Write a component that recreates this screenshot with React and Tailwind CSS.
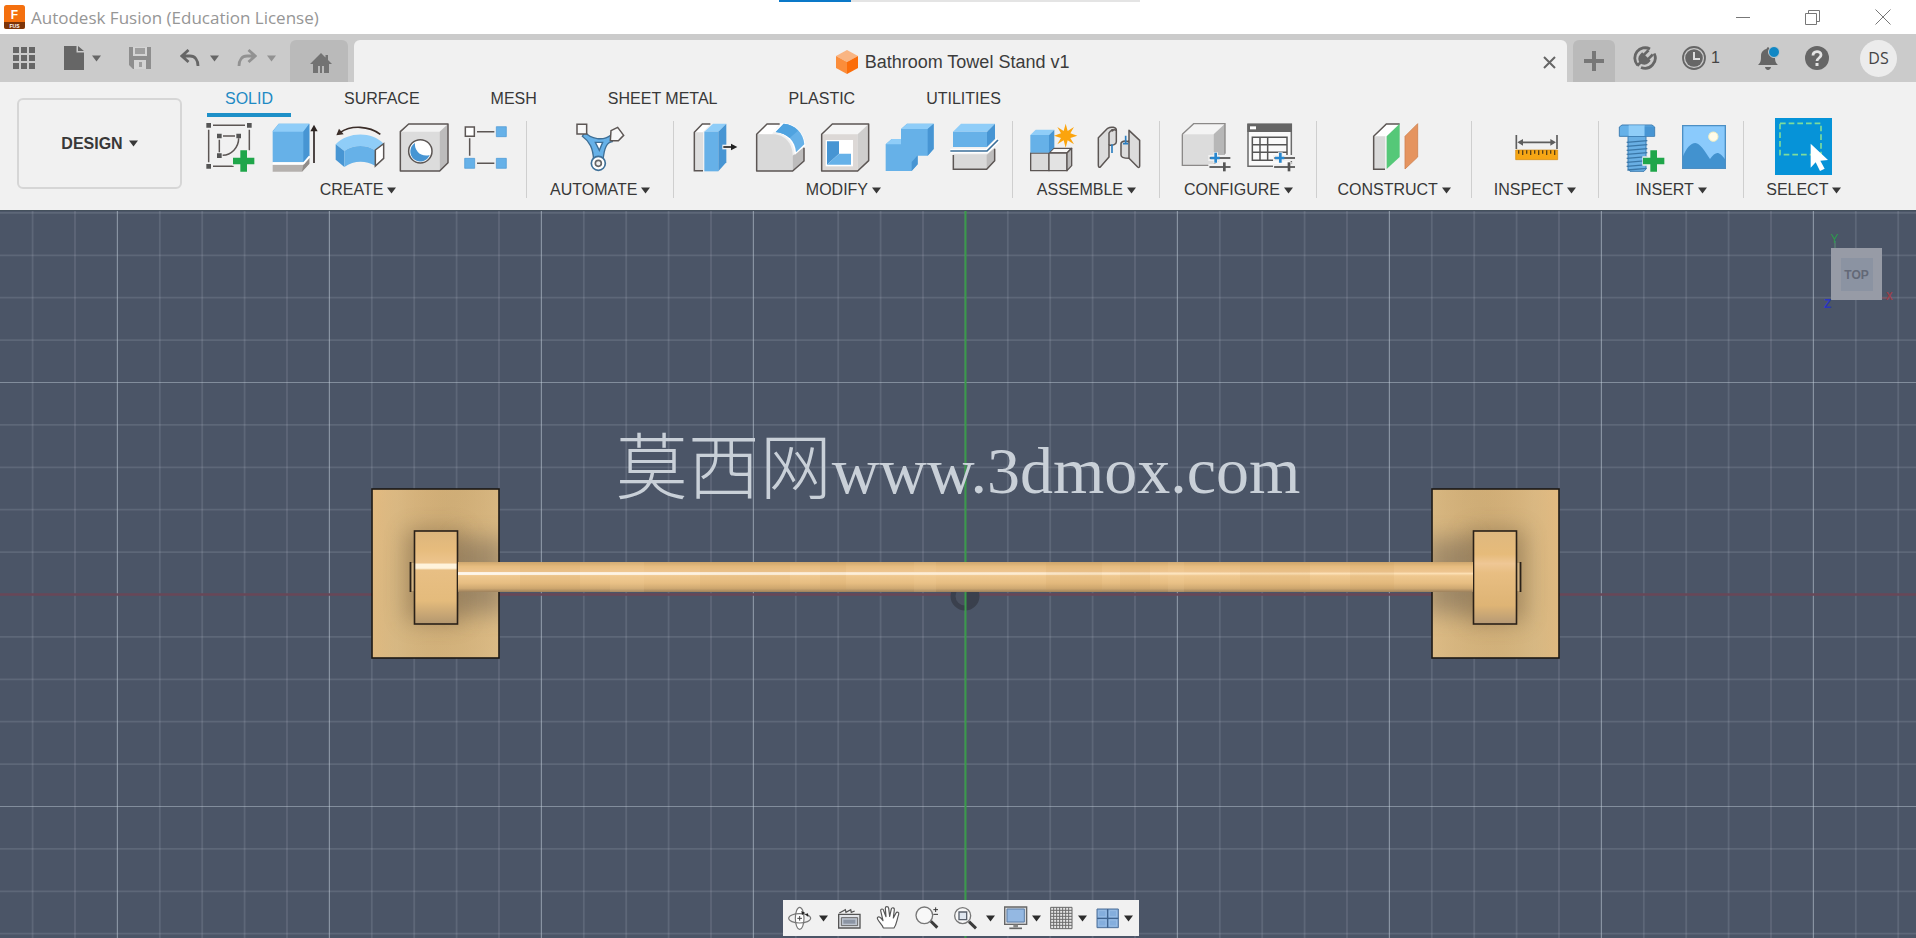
import React from "react";

const OUT = "#5c5654";
const B1 = "#8fcdf8";
const B2 = "#66b1e8";
const B3 = "#4795d3";

/* ---------- shared pieces ---------- */

function Caret() {
  return (
    <svg className="h-[7px] w-[9px] shrink-0" viewBox="0 0 9 7" fill="currentColor" aria-hidden="true">
      <path d="M0 0.5h9L4.500 6.600z" />
    </svg>
  );
}

function Icon({ box, className = "h-12 w-12", children }) {
  return (
    <svg className={"block shrink-0 overflow-visible " + className} viewBox={box} fill="none" aria-hidden="true">
      {children}
    </svg>
  );
}

function IconButton({ label, className = "", children }) {
  return (
    <button type="button" aria-label={label} className={"flex shrink-0 items-center justify-center " + className}>
      {children}
    </button>
  );
}

function Plus({ x, y }) {
  return (
    <g>
      <path d={`M${x} ${y - 34}v68M${x - 34} ${y}h68`} stroke="#f1f1f1" strokeWidth="28" />
      <path d={`M${x} ${y - 32}v64M${x - 32} ${y}h64`} stroke="#1fa64a" strokeWidth="20" />
    </g>
  );
}

/* ---------- ribbon icons ---------- */

const SketchIcon = () => (
  <Icon box="45 126 144 144">
    <path d="M66 133h96M53 146v98M66 256h62M175 146v62M96 165h36M85 176v38M143 172c0 28-22 50-48 51" stroke={OUT} strokeWidth="4.5" />
    <path d="M46 126h14v14h-14zM168 126h14v14h-14zM46 249h14v14h-14zM78 158h14v14h-14zM136 158h14v14h-14zM78 217h14v14h-14z" fill="#555" />
    <Plus x={158} y={240} />
  </Icon>
);

const ExtrudeIcon = () => (
  <Icon box="237 126 144 144">
    <path d="M245 252h92l18-24v20l-22 24h-88z" fill="#b5b1ae" />
    <path d="M337 252l18-24v20l-22 24z" fill="#918c89" />
    <path d="M245 150l18-22h92v96l-18 20h-92z" fill={B2} />
    <path d="M245 152l18-24h92l-18 24z" fill={B1} />
    <path d="M337 152l18-24v96l-18 20z" fill={B3} />
    <path d="M245 247h93l18-21" stroke="#fff" strokeWidth="6" />
    <path d="M369 246v-98" stroke="#2d2523" strokeWidth="5" />
    <path d="M369 131l-11 20h22z" fill="#2d2523" />
  </Icon>
);

const RevolveIcon = () => (
  <Icon box="429 126 144 144">
    <path d="M568 160c-34-26-88-28-120-6" stroke="#3b2d28" strokeWidth="5" />
    <path d="M436 163l8-20 14 17z" fill="#3b2d28" />
    <path d="M434 190c36-38 108-40 144-2l-26 20c-24-18-66-18-92 2z" fill={B1} />
    <path d="M434 190l26 20v48l-26-22z" fill={B3} />
    <path d="M460 210c26-20 68-20 92-2v46c-28-16-64-16-92 4z" fill={B2} />
    <path d="M553 207l25-19v44l-25 23z" fill="#fff" stroke={OUT} strokeWidth="4.5" />
  </Icon>
);

function GrayCube({ x }) {
  return (
    <g transform={`translate(${x} 0)`} strokeLinejoin="round">
      <path d="M0 152l25-23h118l-25 23z" fill="#f3f3f3" />
      <path d="M0 152h118v118H0z" fill="#dcdcdc" />
      <path d="M118 152l25-23v116l-25 25z" fill="#bdbcbc" />
      <path d="M0 152l25-23h118v116l-25 25H0z" stroke={OUT} strokeWidth="4.5" />
    </g>
  );
}

const HoleIcon = () => (
  <Icon box="621 126 144 144">
    <GrayCube x={628} />
    <circle cx="688" cy="211" r="35" fill="#fff" stroke={OUT} strokeWidth="4.5" />
    <path d="M672 186a30 30 0 1 0 44 36c-14 4-28 0-36-10-7-8-9-17-8-26z" fill={B3} />
  </Icon>
);

const PatternIcon = () => (
  <Icon box="813 126 144 144">
    <path d="M858 152h52M836 172v52M858 247h52" stroke={OUT} strokeWidth="4.5" />
    <path d="M823 138h27v28h-27z" fill="#fff" stroke={OUT} strokeWidth="4.5" />
    <path d="M916 137h30v30h-30zM821 232h30v30h-30zM916 232h30v30h-30z" fill={B2} stroke={B3} strokeWidth="2" />
  </Icon>
);

const AutomateIcon = () => (
  <Icon box="141 126 144 144">
    <path d="M168 152c16 24 56 28 78 10l4 20c-16 2-24 16-28 56h-28c-2-38-12-56-34-72z" fill={B2} stroke="#3e6f96" strokeWidth="4" />
    <path d="M199 184h22l-10 24z" fill="#fff" stroke="#3e6f96" strokeWidth="4" />
    <path d="M144 130h29v29h-29z" fill="#f8f8f8" stroke={OUT} strokeWidth="4.5" />
    <path d="M246 149l20-10 18 24-16 16h-24z" fill="#f8f8f8" stroke={OUT} strokeWidth="4.5" />
    <circle cx="208" cy="247" r="21" fill="#fff" stroke="#3e7098" strokeWidth="5" />
    <circle cx="208" cy="247" r="9" fill="#f1f1f1" stroke="#666" strokeWidth="5" />
  </Icon>
);

const PressPullIcon = () => (
  <Icon box="486 126 144 144">
    <path d="M496 154v115h26V152l22-23h-24z" fill="#dedede" />
    <path d="M496 154l24-25h24l-22 25z" fill="#fff" />
    <path d="M544 129h-24l-24 25v115h26" stroke={OUT} strokeWidth="4.5" />
    <path d="M526 152l26-24h40l-24 24z" fill={B1} />
    <path d="M526 152h42v119h-42z" fill={B2} />
    <path d="M568 152l24-24v116l-24 27z" fill={B3} />
    <path d="M580 198h34" stroke="#f1f1f1" strokeWidth="14" />
    <path d="M583 198h30" stroke="#222" strokeWidth="5" />
    <path d="M625 198l-19-10v20z" fill="#222" />
  </Icon>
);

const FilletIcon = () => (
  <Icon box="678 126 144 144">
    <path d="M683 160l30-31h38l-22 31z" fill="#fff" />
    <path d="M683 160h50c32 0 58 26 58 64v46H683z" fill="#d9d9d9" />
    <path d="M791 224l34-30v46l-34 30z" fill="#bdbcbc" />
    <path d="M752 129h-38l-31 31v110h108l34-30v-40" stroke={OUT} strokeWidth="4.5" strokeLinejoin="round" />
    <path d="M733 152l26-26c38 0 68 28 70 68l-32 28c0-38-26-66-64-70z" fill="#fff" />
    <path d="M740 153l24-25c34 2 60 28 62 62l-25 24c-2-34-26-58-61-61z" fill={B2} />
    <path d="M740 153l24-25c18 2 32 9 43 21l-25 22c-11-10-26-16-42-18z" fill="#4fa3e0" />
  </Icon>
);

const ShellIcon = () => (
  <Icon box="870 126 144 144">
    <g strokeLinejoin="round">
      <path d="M878 160l32-31h109l-33 31z" fill="#f5f5f5" />
      <path d="M878 160h108v110H878z" fill="#dcd8d6" />
      <path d="M986 160l33-31v110l-33 31z" fill="#cfcecd" />
      <path d="M878 160l32-31h109v110l-33 31H878z" stroke={OUT} strokeWidth="4.5" />
    </g>
    <path d="M890 177h82v79h-82z" fill="#fff" />
    <path d="M894 181h36v37l-36 33z" fill={B3} />
    <path d="M894 251l36-33h36v33z" fill={B2} />
  </Icon>
);

const CombineIcon = () => (
  <Icon box="1062 126 144 144">
    <path d="M1070 190l18-16h28v-30l18-16h80v76l-18 20h-30v26l-18 20h-78z" fill={B2} />
    <path d="M1116 144l18-16h80l-18 16zM1070 190l18-16h28v16z" fill={B1} />
    <path d="M1196 144l18-16v76l-18 20zM1148 243l18-20v27l-18 20z" fill={B3} />
  </Icon>
);

const SplitIcon = () => (
  <Icon box="1254 126 144 144">
    <path d="M1273 220h100l24-20v40l-24 26h-100z" fill="#d9d9d9" />
    <path d="M1373 222l24-20v38l-24 26z" fill="#bdbcbc" />
    <path d="M1273 222v43h100l24-26v-36" stroke={OUT} strokeWidth="4.5" />
    <path d="M1272 152l24-24h102l-24 24z" fill={B1} />
    <path d="M1272 152h102v46h-102z" fill={B2} />
    <path d="M1374 152l24-24v46l-24 24z" fill={B3} />
    <path d="M1264 210h110l34-34" stroke="#fff" strokeWidth="14" />
    <path d="M1264 210h110l33-33" stroke="#3b6f99" strokeWidth="5" />
  </Icon>
);

const NewComponentIcon = () => (
  <Icon box="65 126 144 144">
    <g stroke={OUT} strokeWidth="4" strokeLinejoin="round">
      <path d="M67 216h55v53H67z" fill="#dadada" />
      <path d="M122 216l14-14h54l-14 14z" fill="#f8f8f8" />
      <path d="M122 216h54v53h-54z" fill="#e3e3e3" />
      <path d="M176 216l14-14v52l-14 15z" fill="#bdbcbc" />
    </g>
    <path d="M66 162l16-16h56l-16 16z" fill={B1} />
    <path d="M66 162h56v53H66z" fill={B2} />
    <path d="M122 162l16-16v53l-16 16z" fill={B3} />
    <circle cx="172" cy="164" r="29" fill="#f1f1f1" />
    <path d="M172 128l6 22 19-12-11 19 21 7-21 7 11 19-19-12-6 22-6-22-19 12 11-19-21-7 21-7-11-19 19 12z" fill="#fba40d" />
  </Icon>
);

const JointIcon = () => (
  <Icon box="257 126 144 144">
    <g stroke={OUT} strokeWidth="4.5" strokeLinejoin="round">
      <path d="M270 170l28-28c10-6 26-4 26 6v34c0 8-10 12-22 10v36l-26 30c-4 2-6-1-6-5z" fill="#dcdcdc" />
      <path d="M302 192v-36c4-8 14-12 22-8" />
      <path d="M394 178l-32-30v34c-12-4-24-2-24 6v34c0 8 12 10 24 10l26 26c4 3 6 0 6-4z" fill="#dcdcdc" />
      <path d="M362 182v50" />
    </g>
    <path d="M311 190v26M352 164v24M344 188h16" stroke="#2d7fc0" strokeWidth="5" />
    <circle cx="312" cy="148" r="4" fill={OUT} />
  </Icon>
);

function Sliders({ x }) {
  return (
    <g transform={`translate(${x} 0)`}>
      <path d="M-4 231h68M-4 258h68" stroke="#f1f1f1" strokeWidth="18" />
      <path d="M0 231h62M0 258h62" stroke="#666" strokeWidth="6" />
      <path d="M18 214v32M45 243v28" stroke="#f1f1f1" strokeWidth="14" />
      <path d="M0 258h62" stroke="#666" strokeWidth="6" />
      <path d="M44 244v27" stroke="#555" strokeWidth="8" />
      <path d="M18 215v30M2 231h28" stroke="#2787cf" strokeWidth="8" />
    </g>
  );
}

const ConfigureIcon = () => (
  <Icon box="519 126 144 144">
    <path d="M520 160l34-32h94l-34 32z" fill="#f4f4f4" />
    <path d="M520 160h94v93h-94z" fill="#dcdcdc" />
    <path d="M614 160l34-32v96l-34 29z" fill="#b7b7b7" />
    <path d="M520 160l34-32h94v90M520 160v93h82" stroke="#8b8988" strokeWidth="4" />
    <Sliders x={602} />
  </Icon>
);

const TableIcon = () => (
  <Icon box="711 126 144 144">
    <path d="M717 130h130v126h-130z" fill="#fafafa" stroke="#6b6b6b" strokeWidth="4.5" />
    <path d="M715 128h134v25h-134z" fill="#656565" />
    <path d="M723 136h18v9h-18z" fill="#fff" />
    <path d="M730 169h104v69h-104zM730 191h104M730 214h104M753 169v69M776 169v69" stroke="#555" strokeWidth="4.5" />
    <Sliders x={796} />
  </Icon>
);

const ConstructIcon = () => (
  <Icon box="1083 126 144 144">
    <path d="M1094 166l36-37h42l-40 37z" fill="#fff" />
    <path d="M1094 166h34v99h-34z" fill="#dadada" />
    <path d="M1172 129h-40l-38 37v99h34" stroke={OUT} strokeWidth="4.5" />
    <path d="M1133 166l39-38v100l-39 36z" fill="#55c878" />
    <path d="M1188 166l38-38v100l-38 36z" fill="#e5945f" stroke="#cf8352" strokeWidth="2.5" />
  </Icon>
);

const InspectIcon = () => (
  <Icon box="126 126 144 144">
    <path d="M142 162v42M264 162v42M152 184h102" stroke="#5e5e5e" strokeWidth="5" />
    <path d="M145 184l17-10v20zM261 184l-17-10v20z" fill="#5e5e5e" />
    <path d="M140 207h126v29H140z" fill="#f6a614" stroke="#d28a10" strokeWidth="2" />
    <path d="M149 208v10M161 208v14M173 208v10M185 208v14M197 208v10M209 208v14M221 208v10M233 208v14M245 208v10M257 208v14" stroke="#5b4215" strokeWidth="4" />
  </Icon>
);

const BoltIcon = () => (
  <Icon box="438 126 144 144">
    <path d="M477 166h54v98l-6 7h-42l-6-7z" fill="#69afe4" stroke="#3f7fb4" strokeWidth="3" />
    <path d="M473 184l62-5M473 196l62-5M473 208l62-5M473 220l62-5M473 232l62-5M473 244l62-5M473 256l62-5M475 267l58-5" stroke="#3a77a8" strokeWidth="4" />
    <path d="M451 138l8-6h90l8 6v28H451z" fill={B2} stroke="#3f7fb4" strokeWidth="3" />
    <path d="M479 133h48v32h-48z" fill={B1} />
    <path d="M527 136h28v29h-28z" fill={B3} />
    <Plus x={554} y={240} />
  </Icon>
);

const PictureIcon = () => (
  <Icon box="630 126 144 144">
    <path d="M641 134h128v128H641z" fill="#8acafc" />
    <path d="M641 228c10-26 24-42 38-42s30 26 44 48c8-12 16-18 22-18s16 8 24 20v26H641z" fill="#4292cf" />
    <circle cx="733" cy="167" r="14" fill="#fffbe9" stroke="#f5f0c0" strokeWidth="3" />
    <path d="M641 134h128v128H641z" stroke="#4c8fc4" strokeWidth="4" />
  </Icon>
);

const SelectIcon = () => (
  <Icon box="918 114 171 171" className="h-[57px] w-[57px]">
    <path d="M918 114h171v171H918z" fill="#0693d8" />
    <path d="M933 130h123v94H933z" stroke="#7ddc9c" strokeWidth="5" strokeDasharray="17 9" />
    <path d="M1025 191l52 49-23 2 13 24-14 7-13-26-15 16z" fill="#fff" />
  </Icon>
);

/* ---------- ribbon ---------- */

const GROUPS = [
  { name: "CREATE", pad: "px-4", icons: [["Create Sketch", SketchIcon], ["Extrude", ExtrudeIcon], ["Revolve", RevolveIcon], ["Hole", HoleIcon], ["Pattern", PatternIcon]] },
  { name: "AUTOMATE", pad: "px-[23px]", icons: [["Automated Modeling", AutomateIcon]] },
  { name: "MODIFY", pad: "px-[17px]", icons: [["Press Pull", PressPullIcon], ["Fillet", FilletIcon], ["Shell", ShellIcon], ["Combine", CombineIcon], ["Split Body", SplitIcon]] },
  { name: "ASSEMBLE", pad: "px-[17px]", icons: [["New Component", NewComponentIcon], ["Joint", JointIcon]] },
  { name: "CONFIGURE", pad: "px-[22px]", icons: [["Configure Model", ConfigureIcon], ["Configuration Table", TableIcon]] },
  { name: "CONSTRUCT", pad: "px-5", icons: [["Offset Plane", ConstructIcon]] },
  { name: "INSPECT", pad: "px-[22px]", icons: [["Measure", InspectIcon]] },
  { name: "INSERT", pad: "px-4", icons: [["Insert Fastener", BoltIcon], ["Insert Image", PictureIcon]] },
  { name: "SELECT", pad: "px-[22px]", icons: [["Select Window", SelectIcon]] },
];

const TABS = ["SOLID", "SURFACE", "MESH", "SHEET METAL", "PLASTIC", "UTILITIES"];

function Ribbon() {
  return (
    <section className="flex h-32 shrink-0 bg-[#f1f1f1] text-[#383838]">
      <button
        type="button"
        className="mt-4 ml-[17px] flex h-[91px] w-[165px] shrink-0 items-center justify-center gap-1.5 rounded-md border-2 border-[#d6d6d6] text-base font-bold"
      >
        DESIGN
        <Caret />
      </button>
      <div className="ml-2 flex flex-col">
        <div role="tablist" className="flex h-[35px] gap-[35px] pl-[17px]">
          {TABS.map((t, i) => (
            <button
              key={t}
              type="button"
              role="tab"
              aria-selected={i === 0}
              className={
                "border-b-4 px-[18px] pt-0.5 text-base whitespace-nowrap " +
                (i === 0 ? "border-[#1e90c8] text-[#1e8ac4]" : "border-transparent")
              }
            >
              {t}
            </button>
          ))}
        </div>
        <div className="flex">
          {GROUPS.map((g, i) => (
            <div key={g.name} className="flex">
              <div className={"flex flex-col items-center " + g.pad}>
                <div className="flex h-[59px] items-center gap-4">
                  {g.icons.map(([label, Glyph]) => (
                    <IconButton key={label} label={label}>
                      <Glyph />
                    </IconButton>
                  ))}
                </div>
                <button type="button" className="mt-1 flex items-center gap-1 text-base leading-5 whitespace-nowrap">
                  {g.name}
                  <Caret />
                </button>
              </div>
              {i < GROUPS.length - 1 && <div className="mt-1 h-[77px] w-px bg-[#cfcfcf]" />}
            </div>
          ))}
        </div>
      </div>
    </section>
  );
}

/* ---------- title and document bars ---------- */

function TitleBar() {
  return (
    <header className="relative flex h-[34px] shrink-0 items-center bg-white">
      <div className="absolute inset-x-0 top-0 flex justify-center pl-0.5">
        <div className="h-0.5 w-[72px] bg-[#0a78c8]" />
        <div className="h-0.5 w-[289px] bg-[#e4e4e4]" />
      </div>
      <svg className="ml-1 h-6 w-[22px]" viewBox="0 0 22 24" aria-hidden="true">
        <rect width="21" height="24" rx="2.5" fill="#f4700f" />
        <path d="M0 17h21v4.500a2.500 2.500 0 0 1-2.500 2.500H2.500A2.500 2.500 0 0 1 0 21.500z" fill="#7d3408" />
        <text x="10.500" y="13.500" textAnchor="middle" fontSize="12" fontWeight="700" fill="#fff" fontFamily="Liberation Sans">F</text>
        <text x="10.500" y="22.500" textAnchor="middle" fontSize="5" fontWeight="700" fill="#fff" fontFamily="Liberation Sans">FUS</text>
      </svg>
      <h1 className="ml-[5px] pt-0.5 font-['Open_Sans',sans-serif] text-[17px] text-[#969696]">Autodesk Fusion (Education License)</h1>
      <div className="ml-auto flex items-center gap-[54px] pr-[25px] text-[#777]">
        <IconButton label="Minimize">
          <svg className="h-4 w-4" viewBox="0 0 16 16" stroke="currentColor" aria-hidden="true"><path d="M1 8.500h14" /></svg>
        </IconButton>
        <IconButton label="Restore">
          <svg className="h-4 w-4" viewBox="0 0 16 16" fill="none" stroke="currentColor" aria-hidden="true"><path d="M.5 4.500h11v11H.5zM3.500 4.500v-3h11v11h-3" /></svg>
        </IconButton>
        <IconButton label="Close window">
          <svg className="h-4 w-4" viewBox="0 0 16 16" stroke="currentColor" aria-hidden="true"><path d="M.5.5l15 15M15.500.5l-15 15" /></svg>
        </IconButton>
      </div>
    </header>
  );
}

function DocumentBar() {
  return (
    <div className="flex h-12 shrink-0 bg-[#cbcbcb] pt-1.5 text-[#666]">
      <div className="flex h-[36px] items-center pl-[13px]">
        <IconButton label="Data panel">
          <svg className="h-[22px] w-[22px]" viewBox="0 0 22 22" fill="currentColor" aria-hidden="true">
            <path d="M0 0h6v6H0zM8 0h6v6H8zM16 0h6v6h-6zM0 8h6v6H0zM8 8h6v6H8zM16 8h6v6h-6zM0 16h6v6H0zM8 16h6v6H8zM16 16h6v6h-6z" />
          </svg>
        </IconButton>
        <IconButton label="File" className="ml-[29px] gap-2">
          <svg className="h-6 w-5" viewBox="0 0 20 24" fill="currentColor" aria-hidden="true">
            <path d="M0 0h12.500v6.500H20V24H0zM14 0l6 5h-6z" />
          </svg>
          <Caret />
        </IconButton>
        <IconButton label="Save" className="ml-7 text-[#8e8e8e]">
          <svg className="h-[22px] w-[22px]" viewBox="0 0 22 22" aria-hidden="true">
            <path d="M0 0h22v22H4l-4-4z" fill="currentColor" />
            <path d="M4 0h14v9H4zM5 13h12v9H5z" fill="#d4d4d4" />
            <path d="M6 1h10v6H6zM10 15h3v5h-3z" fill="currentColor" opacity=".75" />
          </svg>
        </IconButton>
        <IconButton label="Undo" className="ml-[29px] gap-2.5">
          <svg className="h-[18px] w-5" viewBox="0 0 20 18" fill="none" stroke="currentColor" strokeWidth="2.800" aria-hidden="true">
            <path d="M8.500 1L1.800 7l6.700 6M2 7h8c5 0 8 4 8 10" />
          </svg>
          <Caret />
        </IconButton>
        <IconButton label="Redo" className="ml-[18px] gap-2.5 text-[#929292]">
          <svg className="h-[18px] w-5" viewBox="0 0 20 18" fill="none" stroke="currentColor" strokeWidth="2.800" aria-hidden="true">
            <path d="M11.500 1l6.700 6-6.700 6M18 7h-8C5 7 2 11 2 17" />
          </svg>
          <Caret />
        </IconButton>
      </div>
      <IconButton label="Home" className="mr-1.5 ml-[14px] h-[42px] w-[58px] rounded-t-md bg-[#bababa] pt-1 pl-1 text-[#737373]">
        <svg className="h-[22px] w-[22px]" viewBox="0 0 22 22" fill="currentColor" aria-hidden="true">
          <path d="M11 1l4.500 4.500V3H18v5l4 4h-3v9h-5v-7h-2v7h-2v-7H8v7H3v-9H0z" />
        </svg>
      </IconButton>
      <div className="flex h-[42px] min-w-0 flex-1 items-center rounded-t-md bg-[#f1f1f1] pt-0.5 pr-[11px] pl-2">
        <div className="flex flex-1 items-center justify-center gap-[7px]">
          <svg className="h-6 w-[22px]" viewBox="0 0 22 24" aria-hidden="true">
            <path d="M11 0l11 6-11 6L0 6z" fill="#f9b583" />
            <path d="M0 6l11 6v12L0 18z" fill="#fb8d3a" />
            <path d="M22 6l-11 6v12l11-6z" fill="#fb6d0a" />
          </svg>
          <span className="text-lg leading-6 text-[#3c3c3c]">Bathroom Towel Stand v1</span>
        </div>
        <IconButton label="Close tab">
          <svg className="h-[13px] w-[13px]" viewBox="0 0 13 13" stroke="currentColor" strokeWidth="2" aria-hidden="true"><path d="M1 1l11 11M12 1L1 12" /></svg>
        </IconButton>
      </div>
      <IconButton label="New tab" className="ml-1.5 h-[42px] w-[42px] rounded-t-md bg-[#bababa] text-[#777]">
        <svg className="h-5 w-5" viewBox="0 0 20 20" stroke="currentColor" strokeWidth="4" aria-hidden="true"><path d="M10 0v20M0 10h20" /></svg>
      </IconButton>
      <div className="flex h-9 items-center pr-[19px] pl-[18px]">
        <IconButton label="Extensions">
          <svg className="h-6 w-6" viewBox="0 0 24 24" fill="none" stroke="currentColor" aria-hidden="true">
            <path d="M4.500 19A10.300 10.300 0 0 1 17 3M21.200 7.500A10.300 10.300 0 0 1 8 21.500" strokeWidth="2.800" />
            <g transform="translate(12 12) rotate(45)">
              <path d="M-6-2H6V1A6 6 0 0 1-6 1z" fill="currentColor" stroke="none" />
              <path d="M-3-1v-7M3-1v-7M0 6v5" strokeWidth="2.600" />
            </g>
          </svg>
        </IconButton>
        <button type="button" aria-label="Job status" className="ml-[25px] flex items-center gap-[5px]">
          <svg className="h-6 w-6" viewBox="0 0 24 24" fill="none" aria-hidden="true">
            <circle cx="12" cy="12" r="11" stroke="currentColor" strokeWidth="1.800" />
            <circle cx="12" cy="12" r="8.800" fill="currentColor" />
            <path d="M12 6v7h6" stroke="#dcdcdc" strokeWidth="2" />
          </svg>
          <span className="text-base text-[#444]">1</span>
        </button>
        <IconButton label="Notifications" className="ml-[38px]">
          <svg className="h-6 w-[22px]" viewBox="0 0 22 24" fill="currentColor" aria-hidden="true">
            <path d="M0 19c3-3 3-5 3-9 0-4 2.500-6.500 5.500-7C9 .5 11 .5 11.500 3c3.500.5 5.500 3 5.500 7 0 4 0 6 3 9zM7 21h6c0 1.500-1.500 3-3 3s-3-1.500-3-3z" />
            <circle cx="16" cy="6" r="5.500" fill="#1187c4" stroke="#cbcbcb" />
          </svg>
        </IconButton>
        <IconButton label="Help" className="ml-[25px]">
          <svg className="h-6 w-6" viewBox="0 0 24 24" aria-hidden="true">
            <circle cx="12" cy="12" r="12" fill="currentColor" />
            <path d="M8 9.500c0-5 8-5 8-.5 0 3-4 3-4 6" stroke="#e3e3e3" strokeWidth="2.800" fill="none" />
            <path d="M10.500 17h3v3h-3z" fill="#e3e3e3" />
          </svg>
        </IconButton>
        <button type="button" aria-label="Account DS" className="ml-[31px] flex h-[37px] w-[37px] items-center justify-center rounded-full bg-[#ececec] font-['Open_Sans',sans-serif] text-base text-[#444]">
          DS
        </button>
      </div>
    </div>
  );
}

/* ---------- viewport ---------- */

const STEP = 42.4;
const CX = 965.4;
const CY = 384.5;
const COLUMNS = Array.from({ length: 47 }, (_, i) => i - 23);
const ROWS = Array.from({ length: 19 }, (_, i) => i - 9);

function Bracket({ x, flip, face }) {
  return (
    <g transform={flip ? `translate(${x + 127} 278) scale(-1 1)` : `translate(${x} 278)`}>
      <rect x="0" y="1" width="127" height="169" fill="url(#plate)" />
      <rect x="0" y="1" width="127" height="169" fill="url(#grain)" />
      <g clipPath="url(#plateClip)">
        <rect x="34" y="42" width="58" height="92" fill="#5a4630" opacity=".38" filter="url(#soft)" />
        <rect x="84" y="50" width="50" height="76" fill="#5b534c" opacity=".42" filter="url(#soft)" />
      </g>
      <rect x="0" y="1" width="127" height="169" fill="none" stroke="#1c1814" strokeWidth="1.600" />
      <rect x="38" y="75" width="5" height="28" fill="#d2b383" />
      <path d="M38.500 74v30" stroke="#2a2118" strokeWidth="1.800" />
      <rect x="85" y="74" width="43" height="30" fill="url(#rod)" />
      <rect x="42.500" y="43" width="43" height="93" fill={face} stroke="#2a2118" strokeWidth="1.600" />
    </g>
  );
}

function Scene() {
  return (
    <svg className="absolute inset-0 h-full w-full" viewBox="0 0 1916 728" preserveAspectRatio="xMidYMid slice" role="img" aria-label="Towel stand, top view">
      <defs>
        <linearGradient id="plate" x1="0" y1="0" x2="1" y2="1">
          <stop offset="0" stopColor="#deb67e" />
          <stop offset=".35" stopColor="#d3b27c" />
          <stop offset=".7" stopColor="#d6b680" />
          <stop offset="1" stopColor="#dcbd88" />
        </linearGradient>
        <linearGradient id="grain">
          <stop offset="0" stopColor="#e6bd82" stopOpacity=".6" />
          <stop offset=".2" stopColor="#d9bc88" stopOpacity=".4" />
          <stop offset=".55" stopColor="#bf9a62" stopOpacity=".22" />
          <stop offset="1" stopColor="#dcba84" stopOpacity=".5" />
        </linearGradient>
        <linearGradient id="rod" x2="0" y2="1">
          <stop offset="0" stopColor="#cfa76e" />
          <stop offset=".15" stopColor="#e7bd80" />
          <stop offset=".33" stopColor="#eec590" />
          <stop offset=".38" stopColor="#fde0b4" />
          <stop offset=".46" stopColor="#efc890" />
          <stop offset=".7" stopColor="#e7be82" />
          <stop offset=".88" stopColor="#cfa972" />
          <stop offset="1" stopColor="#9c805c" />
        </linearGradient>
        <linearGradient id="shine">
          <stop offset="0" stopColor="#fff" stopOpacity=".75" />
          <stop offset=".55" stopColor="#fff" stopOpacity=".4" />
          <stop offset=".75" stopColor="#fff" stopOpacity=".08" />
          <stop offset="1" stopColor="#fff" stopOpacity="0" />
        </linearGradient>
        <linearGradient id="blockBright" x2="0" y2="1">
          <stop offset="0" stopColor="#dcb57c" />
          <stop offset=".2" stopColor="#e6bc7d" />
          <stop offset=".34" stopColor="#edc48d" />
          <stop offset=".36" stopColor="#fff3dc" />
          <stop offset=".4" stopColor="#fff3dc" />
          <stop offset=".42" stopColor="#e8bf84" />
          <stop offset=".75" stopColor="#e4bb7c" />
          <stop offset="1" stopColor="#b3976f" />
        </linearGradient>
        <linearGradient id="blockSoft" x2="0" y2="1">
          <stop offset="0" stopColor="#dfb87f" />
          <stop offset=".25" stopColor="#e6bb7a" />
          <stop offset=".35" stopColor="#efc795" />
          <stop offset=".45" stopColor="#e8be82" />
          <stop offset=".8" stopColor="#deb475" />
          <stop offset="1" stopColor="#b69a75" />
        </linearGradient>
        <filter id="soft" x="-50%" y="-50%" width="200%" height="200%">
          <feGaussianBlur stdDeviation="11" />
        </filter>
        <clipPath id="plateClip">
          <rect x="0" y="1" width="127" height="169" />
        </clipPath>
      </defs>

      {COLUMNS.map((c) => (
        <path key={"c" + c} d={`M${CX + c * STEP} 0V728`} stroke="#c6d2de" strokeOpacity={c % 5 === 0 ? 0.5 : 0.15} strokeWidth={c % 5 === 0 ? 1.2 : 1.8} />
      ))}
      {ROWS.map((r) => (
        <path key={"r" + r} d={`M0 ${CY + r * STEP}H1916`} stroke="#c6d2de" strokeOpacity={r % 5 === 0 ? 0.45 : 0.15} strokeWidth={r % 5 === 0 ? 1.2 : 1.8} />
      ))}
      <path d="M0 384.500H1916" stroke="#684757" strokeWidth="2.400" />
      <circle cx="965" cy="386" r="12" fill="#4a5160" stroke="#3a404d" strokeWidth="5" />
      <path d="M965 374a12 12 0 0 1 0 24z" fill="#3a404d" />
      <path d="M965.500 0V728" stroke="#3a9a4a" strokeWidth="2" />
      <path d="M0 .5H1916" stroke="#44505c" />

      <Bracket x={372} face="url(#blockBright)" />
      <Bracket x={1432} face="url(#blockSoft)" flip />
      <rect x="458" y="352" width="1015" height="30" fill="url(#rod)" />
      {[[520, 60], [610, 34], [700, 90], [820, 26], [914, 22], [1046, 56], [1120, 30], [1168, 16], [1240, 70], [1350, 44]].map(([x, w], i) => (
        <rect key={x} x={x} y="352" width={w} height="30" fill={i % 3 === 1 ? "#fbe0b0" : "#c98f4a"} opacity=".1" />
      ))}
      <rect x="458" y="362" width="1015" height="3" fill="url(#shine)" />
    </svg>
  );
}

function ViewCube() {
  return (
    <svg className="absolute top-[19px] right-4 h-[84px] w-[84px]" viewBox="0 0 84 84" aria-label="View cube" role="img">
      <path d="M19 12v8" stroke="#5c8f74" />
      <rect x="15" y="19" width="51" height="52" fill="#979ba6" />
      <rect x="25" y="29" width="32" height="33" fill="#8b93a2" />
      <path d="M66 69h6" stroke="#8e4a58" />
      <g fontFamily="Liberation Sans" fontSize="12">
        <text x="40.500" y="49.500" textAnchor="middle" fontWeight="700" fill="#636977">TOP</text>
        <text x="14.500" y="14" fill="#2c9a4c">Y</text>
        <text x="8" y="79" fontWeight="700" fill="#2a35c0">Z</text>
        <text x="70" y="71" fontSize="10" fontWeight="700" fill="#9c3f4a">X</text>
      </g>
    </svg>
  );
}

const NAV = "h-6 w-6";

function NavigationBar() {
  return (
    <div className="absolute inset-x-0 bottom-0.5 flex justify-center pl-1.5">
      <div role="toolbar" aria-label="Navigation" className="flex h-9 items-center bg-[#f1f1f1] pr-1.5 pl-[5px] text-[#2c2c2c]">
        <IconButton label="Orbit" className="gap-[7px]">
          <Icon box="53 43 72 72" className={NAV}>
            <ellipse cx="88" cy="80" rx="13" ry="33" stroke="#777" strokeWidth="3.500" fill="#fff" />
            <ellipse cx="88" cy="80" rx="33" ry="14" stroke="#777" strokeWidth="3.500" />
            <path d="M81 80h14M88 73v14" stroke="#444" strokeWidth="3" />
            <path d="M93 58l11 5-9 7zM104 68l9-3 1 11z" fill="#222" />
          </Icon>
          <Caret />
        </IconButton>
        <IconButton label="Look at" className="ml-[9px]">
          <Icon box="201 45 72 72" className={NAV}>
            <path d="M206 70h64v41h-64z" fill="#e4e6ea" stroke="#555" strokeWidth="4" />
            <path d="M214 80h49v24h-49z" fill="#bcc3ce" stroke="#666" strokeWidth="3" />
            <path d="M220 86h36v12h-36z" fill="#8b94a3" />
            <path d="M208 66l18-10 2 8 14-8 2 8 10-4" stroke="#555" strokeWidth="4" />
          </Icon>
        </IconButton>
        <IconButton label="Pan" className="ml-4">
          <Icon box="319 45 72 72" className={NAV}>
            <path d="M338 111c-2-10-18-22-18-30 2-6 9-4 17 8l-7-30c0-7 8-6 9 0l7 18-2-25c0-7 9-7 10 0l3 24 5-22c2-6 10-4 9 2l-3 25 8-15c3-5 10-2 8 4-6 18-6 30-14 41z" fill="#fff" stroke="#555" strokeWidth="3.500" strokeLinejoin="round" />
          </Icon>
        </IconButton>
        <IconButton label="Zoom" className="ml-3.5">
          <Icon box="435 43 72 72" className={NAV}>
            <path d="M482 88l20 20" stroke="#3c3c3c" strokeWidth="9" />
            <circle cx="463" cy="71" r="25" fill="#f8f8f8" stroke="#777" strokeWidth="4" />
            <path d="M490 54h14M497 47v14M490 68h14" stroke="#333" strokeWidth="3" />
          </Icon>
        </IconButton>
        <IconButton label="Fit" className="ml-[15px] gap-2">
          <Icon box="553 43 72 72" className={NAV}>
            <path d="M598 90l21 20" stroke="#3c3c3c" strokeWidth="9" />
            <circle cx="579" cy="72" r="24" fill="#f8f8f8" stroke="#777" strokeWidth="4" />
            <path d="M568 61h23v23h-23z" fill="#dfe6ef" stroke="#59606c" strokeWidth="4" />
          </Icon>
          <Caret />
        </IconButton>
        <IconButton label="Display settings" className="ml-[9px] gap-1">
          <Icon box="702 45 72 72" className={NAV}>
            <path d="M704 48h66v52h-66z" fill="#d7d9dc" stroke="#666" strokeWidth="4" />
            <path d="M711 54h52v39h-52z" fill="#94b8e2" stroke="#5c7fa8" strokeWidth="3" />
            <path d="M730 101h14v8h-14z" fill="#888" />
            <path d="M718 112h38" stroke="#666" strokeWidth="5" />
          </Icon>
          <Caret />
        </IconButton>
        <IconButton label="Grid and snaps" className="ml-[9px] gap-1">
          <Icon box="841 45 72 72" className={NAV}>
            <path d="M843 49h64v64h-64z" fill="#e6e6e6" stroke="#666" strokeWidth="3" />
            <path d="M843 58h64M843 67h64M843 76h64M843 85h64M843 94h64M843 103h64M852 49v64M861 49v64M870 49v64M879 49v64M888 49v64M897 49v64" stroke="#6b6b6b" strokeWidth="3" />
          </Icon>
          <Caret />
        </IconButton>
        <IconButton label="Viewports" className="ml-[9px] gap-1">
          <Icon box="979 45 72 72" className={NAV}>
            <path d="M982 54h64v56h-64z" fill="#84aedd" stroke="#4d6f98" strokeWidth="3" />
            <path d="M1014 54v56M982 82h64" stroke="#3f638e" strokeWidth="4" />
            <path d="M987 59h22v18h-22zM1019 59h22v18h-22zM987 87h22v18h-22zM1019 87h22v18h-22z" stroke="#a3c4e8" strokeWidth="2" />
          </Icon>
          <Caret />
        </IconButton>
      </div>
    </div>
  );
}

export default function App() {
  return (
    <div className="flex min-h-screen flex-col overflow-hidden font-['Liberation_Sans',Arial,sans-serif]">
      <TitleBar />
      <DocumentBar />
      <Ribbon />
      <main className="relative flex-1 overflow-hidden bg-[#4b5567]">
        <Scene />
        <p className="absolute inset-x-0 top-[202px] flex items-baseline justify-center text-[#c9d0d8]">
          <span className="font-['Noto_Sans_CJK_SC',sans-serif] text-7xl leading-[100px] font-light">莫西网</span>
          <span className="font-['Liberation_Serif','Noto_Sans_CJK_SC',serif] text-[66px] leading-[100px]">www.3dmox.com</span>
        </p>
        <ViewCube />
        <NavigationBar />
      </main>
    </div>
  );
}
